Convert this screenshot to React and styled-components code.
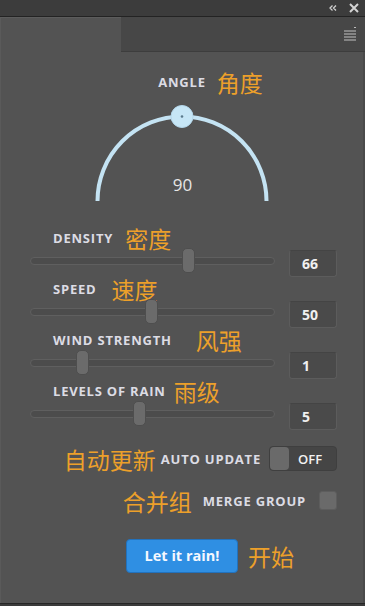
import React from "react";
import styled, { createGlobalStyle } from "styled-components";

const Global = createGlobalStyle`
  html, body { margin: 0; padding: 0; background: #3a3a3a; }
  * { box-sizing: border-box; }
`;

const ORANGE = "#eda02a";
const LABEL = "#dcdce4";

const Root = styled.div`
  width: 365px;
  height: 606px;
  display: flex;
  flex-direction: column;
  font-family: "Open Sans", "Liberation Sans", sans-serif;
  overflow: hidden;
`;

const TitleBar = styled.div`
  height: 17px;
  background: #3c3c3c;
  border-bottom: 1px solid #232323;
  display: flex;
  align-items: center;
  justify-content: flex-end;
  gap: 12px;
  padding-right: 6px;
`;

const TabRow = styled.div`
  height: 35px;
  display: flex;
`;

const ActiveTab = styled.div`
  width: 121px;
  background: #535353;
  border-top: 1px solid #5c5c5c;
  border-left: 1px solid #5a5a5a;
`;

const TabFill = styled.div`
  flex: 1;
  background: #474747;
  border-bottom: 1px solid #3d3d3d;
  display: flex;
  align-items: center;
  justify-content: flex-end;
  padding-right: 8px;
`;

const Panel = styled.div`
  flex: 1;
  background: #535353;
  border-left: 1px solid #5a5a5a;
  border-right: 2px solid #4a4a4a;
  display: flex;
  flex-direction: column;
  padding-top: 18px;
`;

const BottomEdge = styled.div`
  height: 3px;
  background: #3b3b3b;
  border-top: 1px solid #262626;
`;

const CenterRow = styled.div`
  display: grid;
  grid-template-columns: 1fr auto 1fr;
  align-items: center;
  height: ${(p) => p.$h}px;
  margin-top: ${(p) => p.$mt || 0}px;
`;

const Label = styled.span`
  font-weight: 700;
  font-size: 13px;
  letter-spacing: 0.8px;
  color: ${LABEL};
  white-space: nowrap;
`;

const Cn = styled.span`
  font-family: "Noto Sans CJK SC", "Noto Sans", sans-serif;
  font-size: 23px;
  line-height: 24px;
  color: ${ORANGE};
  white-space: nowrap;
  margin-left: ${(p) => p.$ml || 0}px;
  margin-right: ${(p) => p.$mr || 0}px;
  justify-self: start;
`;

const Dial = styled.div`
  position: relative;
  height: 110px;
  display: flex;
  justify-content: center;
`;

const DialValue = styled.div`
  position: absolute;
  top: 79px;
  left: 0;
  right: 0;
  text-align: center;
  font-size: 17px;
  color: #e6e6e6;
  padding-left: 1px;
`;

const Sliders = styled.div`
  margin-top: 22px;
  padding: 0 26px 0 29px;
  display: flex;
  flex-direction: column;
`;

const LabelRow = styled.div`
  height: 24px;
  display: flex;
  align-items: center;
  padding-left: 23px;
`;

const SliderRow = styled.div`
  height: 27px;
  display: flex;
  align-items: center;
  gap: 14px;
`;

const Track = styled.div`
  position: relative;
  flex: 1;
  height: 8px;
  margin-bottom: 5px;
  background: #4c4c4c;
  border: 1px solid #5f5f5f;
  border-radius: 4px;
`;

const Thumb = styled.div`
  position: absolute;
  top: -10px;
  width: 13px;
  height: 25px;
  border-radius: 5px;
  background: #6b6b6b;
  border: 1px solid #4e4e4e;
`;

const NumBox = styled.div`
  width: 48px;
  height: 27px;
  background: #4a4a4a;
  border: 1px solid #5c5c5c;
  border-top-color: #444;
  border-radius: 3px;
  display: flex;
  align-items: center;
  padding-left: 12px;
  font-weight: 700;
  font-size: 14px;
  color: #f0f0f0;
`;

const OptionRow = styled.div`
  height: 25px;
  display: flex;
  align-items: center;
  justify-content: flex-end;
  padding-right: 26px;
  margin-top: ${(p) => p.$mt}px;
`;

const Toggle = styled.div`
  width: 68px;
  height: 25px;
  margin-left: 8px;
  border-radius: 4px;
  background: #454545;
  border: 1px solid #3f3f3f;
  display: flex;
  align-items: stretch;
`;

const ToggleKnob = styled.div`
  width: 19px;
  border-radius: 4px;
  background: #6a6a6a;
`;

const ToggleText = styled.div`
  flex: 1;
  display: flex;
  align-items: center;
  padding-left: 9px;
  font-size: 13px;
  font-weight: 600;
  color: #f2f2f2;
`;

const Checkbox = styled.div`
  width: 18px;
  height: 19px;
  margin-left: 13px;
  border-radius: 3px;
  background: #6a6a6a;
  border: 1px solid #5d5d5d;
`;

const Button = styled.button`
  justify-self: center;
  width: 112px;
  height: 34px;
  border-radius: 4px;
  background: #2f8fe3;
  border: 1px solid #2272bd;
  color: #f4f8ff;
  font-family: "Open Sans", "Liberation Sans", sans-serif;
  font-weight: 700;
  font-size: 14.5px;
  padding: 0 0 2px;
`;

const sliders = [
  { label: "DENSITY", cn: "密度", gap: 12, value: 66, pos: 65 },
  { label: "SPEED", cn: "速度", gap: 15, value: 50, pos: 49.6 },
  { label: "WIND STRENGTH", cn: "风强", gap: 24, value: 1, pos: 21.3 },
  { label: "LEVELS OF RAIN", cn: "雨级", gap: 8, value: 5, pos: 44.9 },
];

function ArcDial() {
  const cx = 90;
  const cy = 107;
  const r = 84.5;
  return (
    <svg width="180" height="110" viewBox="0 0 180 110">
      <path
        d={`M ${cx - r} ${cy} A ${r} ${r} 0 0 1 ${cx + r} ${cy}`}
        fill="none"
        stroke="#c4e3f3"
        strokeWidth="4"
      />
      <circle cx={cx} cy={cy - r} r="11" fill="#c6e6f6" stroke="#b3d6ea" strokeWidth="1" />
      <circle cx={cx} cy={cy - r} r="1.3" fill="#5a7a8c" />
    </svg>
  );
}

export default function App() {
  return (
    <Root>
      <Global />
      <TitleBar>
        <svg width="8" height="8" viewBox="0 0 8 8">
          <path d="M3.5 1.5 L1 4 L3.5 6.5 M7 1.5 L4.5 4 L7 6.5" fill="none" stroke="#cfcfcf" strokeWidth="1.3" />
        </svg>
        <svg width="10" height="10" viewBox="0 0 10 10">
          <path d="M1 1 L9 9 M9 1 L1 9" stroke="#d4d4d4" strokeWidth="2" />
        </svg>
      </TitleBar>
      <TabRow>
        <ActiveTab />
        <TabFill>
          <svg width="14" height="14" viewBox="0 0 14 14">
            <path d="M11 0.5 H13" stroke="#bdbdbd" strokeWidth="1" />
            <path d="M1 4 H13 M1 7 H13 M1 10 H13 M1 13 H13" stroke="#c2c2c2" strokeWidth="1.2" />
          </svg>
        </TabFill>
      </TabRow>
      <Panel>
        <CenterRow $h={24}>
          <span />
          <Label>ANGLE</Label>
          <Cn $ml={11}>角度</Cn>
        </CenterRow>
        <Dial>
          <ArcDial />
          <DialValue>90</DialValue>
        </Dial>
        <Sliders>
          {sliders.map((s) => (
            <React.Fragment key={s.label}>
              <LabelRow>
                <Label>{s.label}</Label>
                <Cn $ml={s.gap}>{s.cn}</Cn>
              </LabelRow>
              <SliderRow>
                <Track>
                  <Thumb style={{ left: `calc(${s.pos}% - 7px)` }} />
                </Track>
                <NumBox>{s.value}</NumBox>
              </SliderRow>
            </React.Fragment>
          ))}
        </Sliders>
        <OptionRow $mt={16}>
          <Cn $mr={5}>自动更新</Cn>
          <Label>AUTO UPDATE</Label>
          <Toggle>
            <ToggleKnob />
            <ToggleText>OFF</ToggleText>
          </Toggle>
        </OptionRow>
        <OptionRow $mt={17}>
          <Cn $mr={11}>合并组</Cn>
          <Label>MERGE GROUP</Label>
          <Checkbox />
        </OptionRow>
        <CenterRow $h={34} $mt={26}>
          <span />
          <Button>Let it rain!</Button>
          <Cn $ml={10}>开始</Cn>
        </CenterRow>
      </Panel>
      <BottomEdge />
    </Root>
  );
}
